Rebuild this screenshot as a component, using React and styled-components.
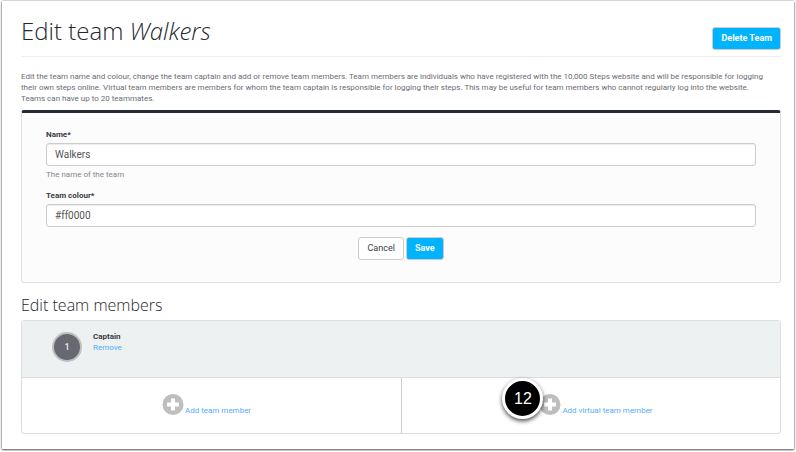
import React, { useState } from "react";
import styled, { createGlobalStyle } from "styled-components";

const GlobalStyle = createGlobalStyle`
  * {
    box-sizing: border-box;
  }

  body {
    margin: 0;
    background: #fff;
    color: #3a3b42;
    font-family: Roboto, "Open Sans", sans-serif;
    font-size: 8px;
    line-height: 11px;
  }
`;

const Page = styled.main`
  margin: 1px 2px 2px;
  padding: 14px 13px 15px 19px;
  background: #fff;
  box-shadow: 0 0 2px rgba(0, 0, 0, 0.4), 0 1px 2px rgba(0, 0, 0, 0.6);
`;

const PageHeader = styled.header`
  display: flex;
  justify-content: space-between;
  align-items: flex-end;
  height: 42px;
  padding-bottom: 6px;
  border-bottom: 1px solid #eee;
`;

const Title = styled.h1`
  margin: 0;
  color: #26272e;
  font-family: "Open Sans", sans-serif;
  font-size: 24px;
  font-weight: 300;
  line-height: 38px;
`;

const Intro = styled.p`
  margin: 14px 0 6px;
  padding-right: 12px;
  color: #6b6c74;
`;

const Button = styled.button`
  height: 23px;
  padding: 0 8px 1px;
  border: 1px solid #ccc;
  border-radius: 3px;
  background: ${({ $primary }) => ($primary ? "#00b3ff" : "#fff")};
  color: ${({ $primary }) => ($primary ? "#fff" : "#3a3b42")};
  font-family: inherit;
  font-size: 9px;
  font-weight: ${({ $primary }) => ($primary ? 700 : 400)};
  line-height: 12px;
`;

const Form = styled.form`
  padding: 16px 24px 22px;
  border: 1px solid #e0e0e0;
  border-top: 3px solid #262936;
  border-radius: 3px;
  background: #fcfcfc;
`;

const Field = styled.div`
  display: flex;
  flex-direction: column;
  margin-bottom: 10px;
`;

const Label = styled.label`
  margin-bottom: 3px;
  font-weight: 700;
`;

const Input = styled.input`
  width: 100%;
  height: 23px;
  padding: 0 8px 1px;
  border: 1px solid #ccc;
  border-radius: 3px;
  background: #fff;
  box-shadow: inset 0 1px 1px rgba(0, 0, 0, 0.08);
  color: #555;
  font-family: inherit;
  font-size: 10px;
`;

const Hint = styled.span`
  margin-top: 3px;
  color: #85868c;
`;

const Actions = styled.div`
  display: flex;
  justify-content: center;
  gap: 2px;
`;

const SectionTitle = styled.h2`
  margin: 11px 0 4px;
  color: #26272e;
  font-family: "Open Sans", sans-serif;
  font-size: 16px;
  font-weight: 300;
  line-height: 22px;
`;

const Members = styled.section`
  border: 1px solid #ddd;
  border-radius: 3px;
`;

const Member = styled.div`
  display: flex;
  gap: 11px;
  height: 57px;
  padding: 10px 30px;
  border-bottom: 1px solid #ddd;
  background: #edf1f2;
`;

const Avatar = styled.span`
  width: 30px;
  height: 30px;
  margin-top: 1px;
  border: 2px solid #bfbfbf;
  border-radius: 50%;
  background: #686873;
  color: #ddd;
  font-size: 9px;
  font-weight: 700;
  line-height: 26px;
  text-align: center;
`;

const MemberInfo = styled.div`
  display: flex;
  flex-direction: column;
  align-items: flex-start;
`;

const Link = styled.a`
  color: #55acfb;
  text-decoration: none;
`;

const AddRow = styled.div`
  display: grid;
  grid-template-columns: 1fr 1fr;
`;

const AddCell = styled.div`
  display: flex;
  justify-content: center;
  height: 55px;
  padding: 15px 10px 15px 0;

  & + & {
    padding: 15px 0 15px 10px;
    border-left: 1px solid #ccc;
  }
`;

const AddLink = styled(Link)`
  position: relative;
  display: flex;
  align-items: flex-end;
  gap: 1px;
  height: 23px;
`;

const StepBadge = styled.span`
  position: absolute;
  top: -15px;
  left: -37px;
  width: 41px;
  height: 41px;
  border: 3px solid #fff;
  border-radius: 50%;
  background: #000;
  box-shadow: 0 2px 4px rgba(0, 0, 0, 0.7);
  color: #fff;
  font-family: "Liberation Sans", Arial, sans-serif;
  font-size: 16px;
  line-height: 35px;
  text-align: center;
`;

const PlusIcon = () => (
  <svg width="22" height="23" viewBox="0 0 22 23" aria-hidden="true">
    <circle cx="11" cy="11.5" r="10.5" fill="#bebebe" />
    <path d="M9 5.5h4v4h4v4h-4v4H9v-4H5v-4h4z" fill="#fff" />
  </svg>
);

function App() {
  const [name, setName] = useState("Walkers");
  const [colour, setColour] = useState("#ff0000");

  return (
    <>
      <GlobalStyle />
      <Page>
        <PageHeader>
          <Title>
            Edit team <em>Walkers</em>
          </Title>
          <Button type="button" $primary>Delete Team</Button>
        </PageHeader>
        <Intro>
          Edit the team name and colour, change the team captain and add or remove team members. Team members are
          individuals who have registered with the 10,000 Steps website and will be responsible for logging their own
          steps online. Virtual team members are members for whom the team captain is responsible for logging their
          steps. This may be useful for team members who cannot regularly log into the website. Teams can have up to 20
          teammates.
        </Intro>
        <Form onSubmit={(e) => e.preventDefault()}>
          <Field>
            <Label htmlFor="name">Name*</Label>
            <Input id="name" value={name} onChange={(e) => setName(e.target.value)} aria-describedby="name-hint" />
            <Hint id="name-hint">The name of the team</Hint>
          </Field>
          <Field>
            <Label htmlFor="colour">Team colour*</Label>
            <Input id="colour" value={colour} onChange={(e) => setColour(e.target.value)} />
          </Field>
          <Actions>
            <Button type="button">Cancel</Button>
            <Button type="submit" $primary>Save</Button>
          </Actions>
        </Form>
        <SectionTitle>Edit team members</SectionTitle>
        <Members>
          <Member>
            <Avatar>1</Avatar>
            <MemberInfo>
              <strong>Captain</strong>
              <Link href="#remove">Remove</Link>
            </MemberInfo>
          </Member>
          <AddRow>
            <AddCell>
              <AddLink href="#add-member">
                <PlusIcon />
                Add team member
              </AddLink>
            </AddCell>
            <AddCell>
              <AddLink href="#add-virtual-member">
                <PlusIcon />
                Add virtual team member
                <StepBadge>12</StepBadge>
              </AddLink>
            </AddCell>
          </AddRow>
        </Members>
      </Page>
    </>
  );
}

export default App;
